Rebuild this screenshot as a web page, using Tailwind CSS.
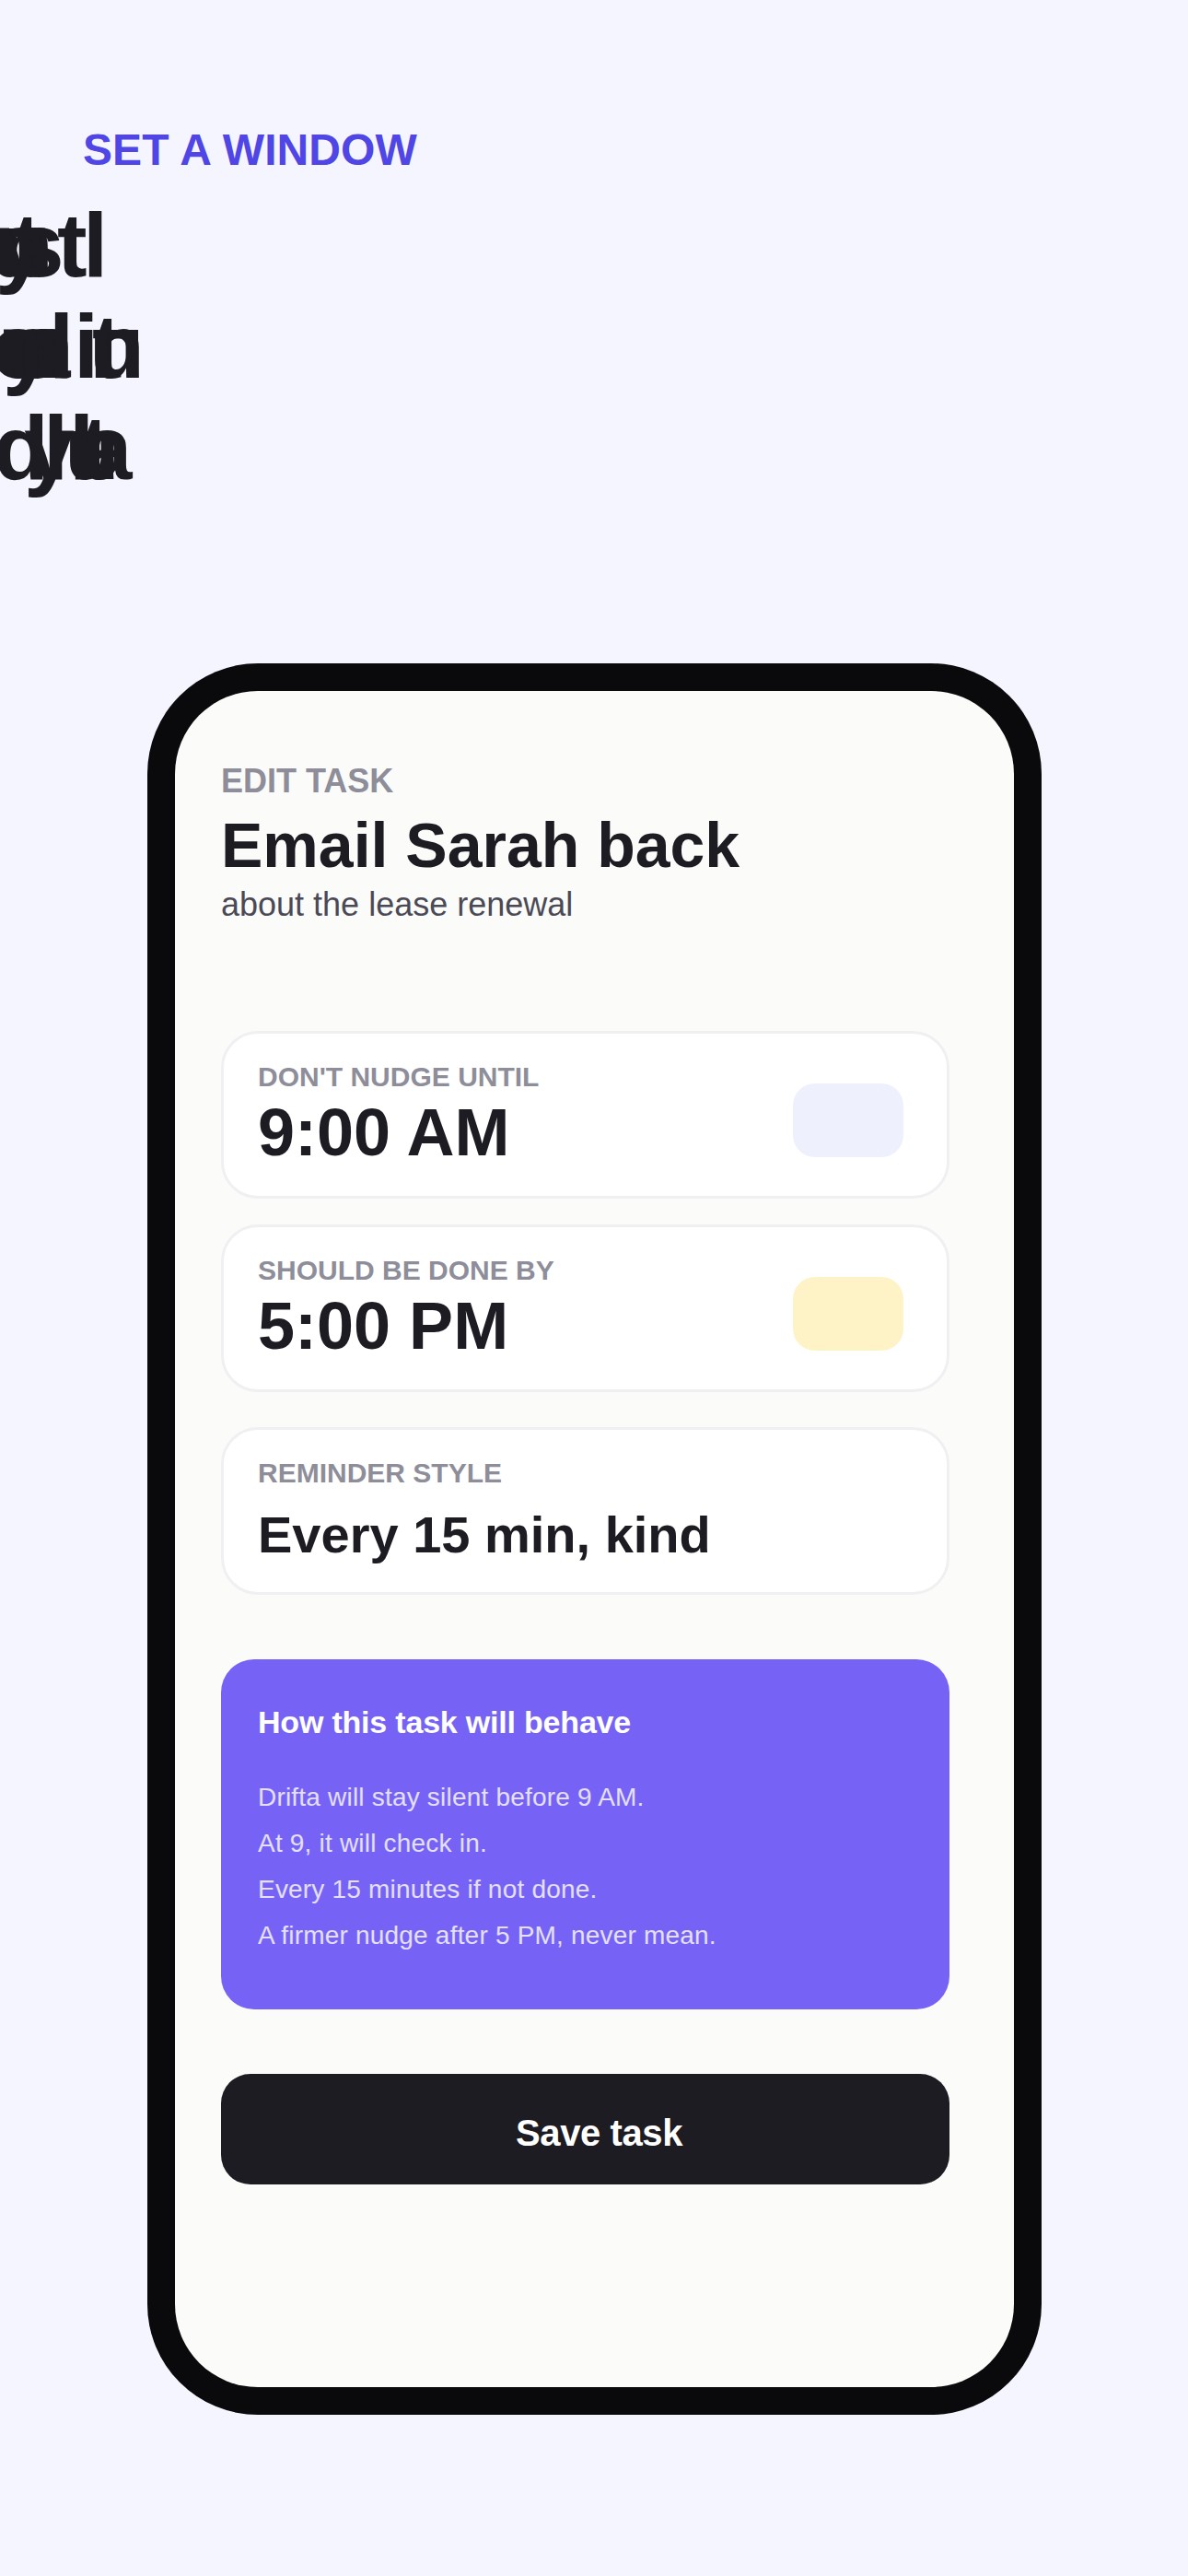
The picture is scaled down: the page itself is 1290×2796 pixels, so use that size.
<!DOCTYPE html>
<html lang="en">
<head>
  <meta charset="UTF-8" />
  <title>Set a window</title>
  <script src="https://cdn.jsdelivr.net/npm/@tailwindcss/browser@4"></script>
</head>
<body class="w-[1290px] h-[2796px] overflow-hidden bg-[#f5f5ff] font-['Liberation_Sans',sans-serif] text-[#1c1c22]">

  <header class="pt-[133px] pl-[90px] h-[720px]">
    <p class="text-[48px] leading-[60px] font-bold tracking-[0.1px] text-[#4f46e5]">SET A WINDOW</p>
    <h1 class="mt-[18px] -ml-[90px] text-[98px] leading-[110px] font-bold">
      <span class="block relative h-[110px]">
        <span class="absolute left-[-12px]">u</span>
        <span class="absolute left-[-2px]">n</span>
        <span class="absolute left-[-8px]">o</span>
        <span class="absolute left-[-5px]">y</span>
        <span class="absolute left-[13px]">t</span>
        <span class="absolute left-[15px]">s</span>
        <span class="absolute left-[62px]">t</span>
        <span class="absolute left-[90px]">l</span>
      </span>
      <span class="block relative h-[110px]">
        <span class="absolute left-[-10px]">o</span>
        <span class="absolute left-[3px]">y</span>
        <span class="absolute left-[-2px]">u</span>
        <span class="absolute left-[8px]">n</span>
        <span class="absolute left-[6px]">o</span>
        <span class="absolute left-[22px]">a</span>
        <span class="absolute left-[20px]">n</span>
        <span class="absolute left-[53px]">l</span>
        <span class="absolute left-[80px]">i</span>
        <span class="absolute left-[100px]">t</span>
        <span class="absolute left-[97px]">n</span>
        <span class="absolute left-[97px]">u</span>
      </span>
      <span class="block relative h-[110px]">
        <span class="absolute left-[-7px]">d</span>
        <span class="absolute left-[47px]">l</span>
        <span class="absolute left-[26px]">y</span>
        <span class="absolute left-[75px]">l</span>
        <span class="absolute left-[87px]">t</span>
        <span class="absolute left-[70px]">u</span>
        <span class="absolute left-[89px]">a</span>
      </span>
    </h1>
  </header>

  <main class="ml-[160px] w-[971px] h-[1901px] rounded-[120px] bg-[#0a0a0c] p-[30px]">
    <div class="h-full rounded-[90px] bg-[#fbfbf9] px-[50px] pt-[76px]">
      <p class="text-[36px] leading-[44px] font-bold text-[#8e8e9a]">EDIT TASK</p>
      <h2 class="mt-[8px] text-[68px] leading-[78px] font-bold">Email Sarah back</h2>
      <p class="mt-[4px] text-[36px] leading-[44px] text-[#4a4a56]">about the lease renewal</p>

      <div class="mt-[115px] w-[791px] flex flex-col">
        <div class="h-[182px] rounded-[40px] bg-white border-[3px] border-[#f0f0f2] pl-[37px] pr-[47px] pt-[29px] flex justify-between items-start">
          <div>
            <p class="text-[30px] leading-[36px] font-bold text-[#8e8e9a]">DON'T NUDGE UNTIL</p>
            <p class="mt-[2px] text-[72px] leading-[80px] font-bold">9:00 AM</p>
          </div>
          <div class="mt-[25px] w-[120px] h-[80px] rounded-[24px] bg-[#eef0fd]"></div>
        </div>

        <div class="mt-[28px] h-[182px] rounded-[40px] bg-white border-[3px] border-[#f0f0f2] pl-[37px] pr-[47px] pt-[29px] flex justify-between items-start">
          <div>
            <p class="text-[30px] leading-[36px] font-bold text-[#8e8e9a]">SHOULD BE DONE BY</p>
            <p class="mt-[2px] text-[72px] leading-[80px] font-bold">5:00 PM</p>
          </div>
          <div class="mt-[25px] w-[120px] h-[80px] rounded-[24px] bg-[#fef3c7]"></div>
        </div>

        <div class="mt-[38px] h-[182px] rounded-[40px] bg-white border-[3px] border-[#f0f0f2] pl-[37px] pt-[29px]">
          <p class="text-[30px] leading-[36px] font-bold text-[#8e8e9a]">REMINDER STYLE</p>
          <p class="mt-[17px] text-[56px] leading-[64px] font-bold">Every 15 min, kind</p>
        </div>

        <div class="mt-[70px] h-[380px] rounded-[36px] bg-[#7663f5] pl-[40px] pt-[47px] text-white">
          <p class="text-[34px] leading-[42px] font-bold tracking-[-0.2px]">How this task will behave</p>
          <div class="mt-[36px] text-[28px] leading-[50px] tracking-[0.2px] text-white/80">
            <p>Drifta will stay silent before 9 AM.</p>
            <p>At 9, it will check in.</p>
            <p>Every 15 minutes if not done.</p>
            <p>A firmer nudge after 5 PM, never mean.</p>
          </div>
        </div>

        <button class="mt-[70px] h-[120px] rounded-[32px] bg-[#1c1c22] pl-[30px] pt-[8px] text-[40px] font-bold tracking-[-0.4px] text-white">Save task</button>
      </div>
    </div>
  </main>
</body>
</html>
